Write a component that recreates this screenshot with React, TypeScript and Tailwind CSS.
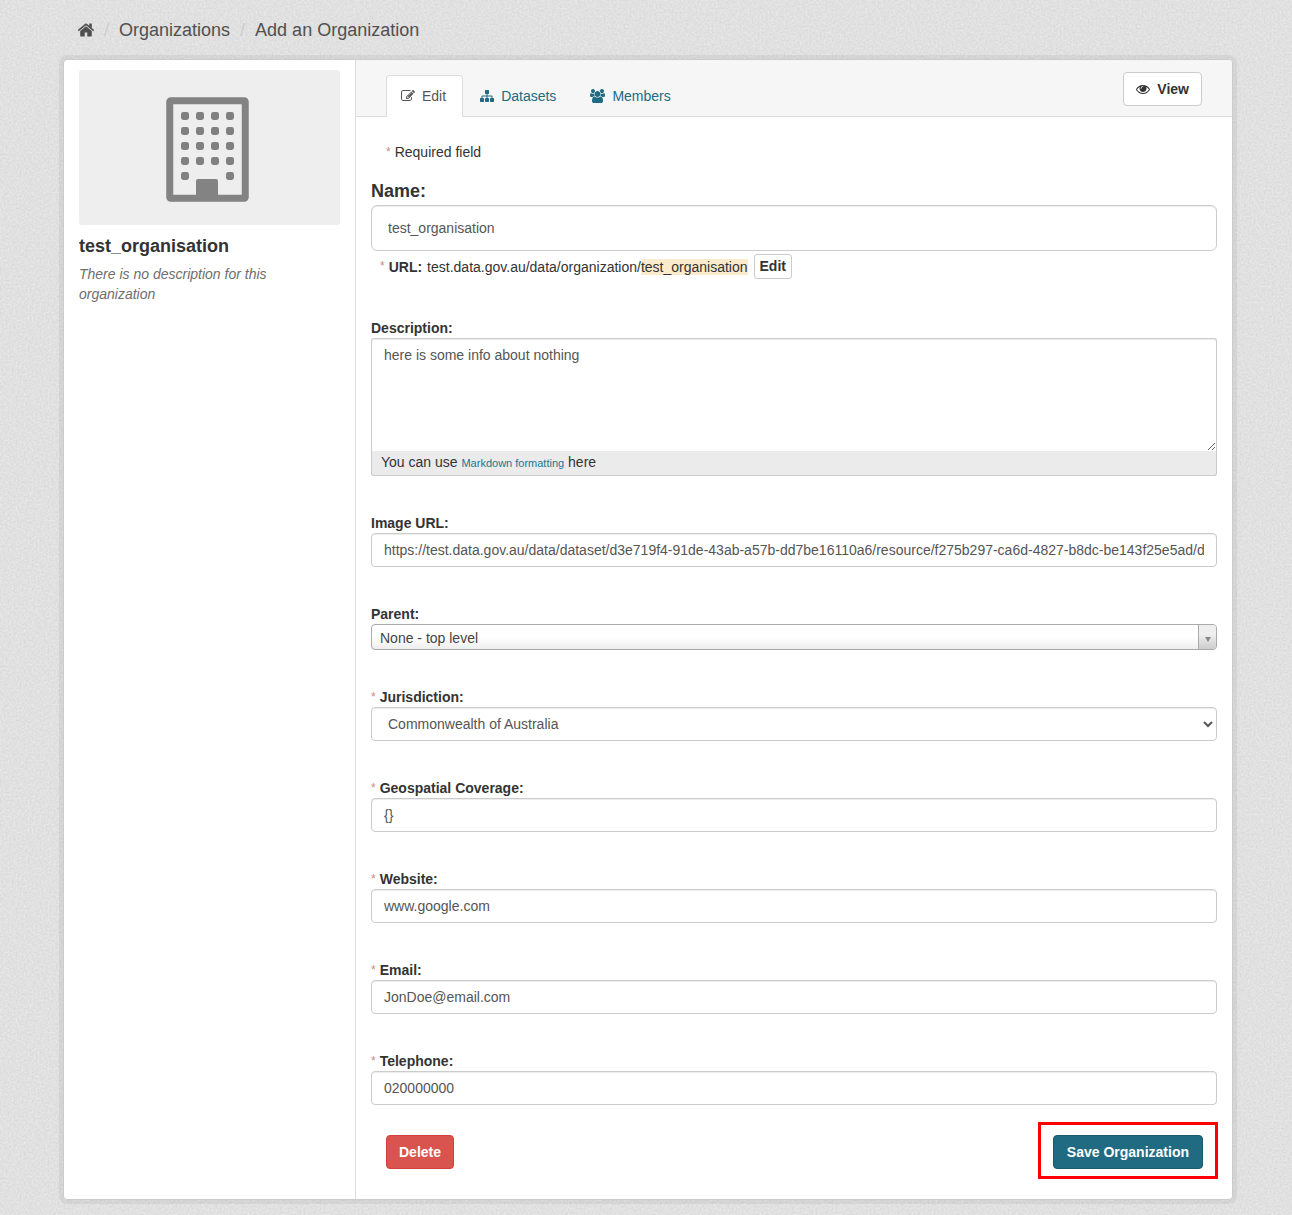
import React, { type ReactNode } from "react";

type IconProps = { d: string; box?: string; className?: string };

function Icon({ d, box = "0 0 1792 1792", className = "" }: IconProps) {
  return (
    <svg viewBox={box} fill="currentColor" aria-hidden="true" className={className}>
      <path d={d} />
    </svg>
  );
}

const HOME =
  "M1472 992v480q0 26-19 45t-45 19h-384v-384h-256v384h-384q-26 0-45-19t-19-45v-480q0-1 .5-3t.5-3l575-474 575 474q1 2 1 6zm223-69l-62 74q-8 9-21 11h-3q-13 0-21-7l-692-577-692 577q-12 8-24 7-13-2-21-11l-62-74q-8-10-7-23.5t11-21.5l719-599q32-26 76-26t76 26l244 204v-195q0-14 9-23t23-9h192q14 0 23 9t9 23v408l219 182q10 8 11 21.5t-7 23.5z";
const EYE =
  "M1664 960q-152-236-381-353 61 104 61 225 0 185-131.5 316.5t-316.5 131.5-316.5-131.5-131.5-316.5q0-121 61-225-229 117-381 353 133 205 333.5 326.5t434.5 121.5 434.5-121.5 333.5-326.5zm-720-384q0-20-14-34t-34-14q-125 0-214.5 89.5t-89.5 214.5q0 20 14 34t34 14 34-14 14-34q0-86 61-147t147-61q20 0 34-14t14-34zm848 384q0 34-20 69-140 230-376.5 368.5t-499.5 138.5-499.5-139-376.5-368q-20-35-20-69t20-69q140-229 376.5-368t499.5-139 499.5 139 376.5 368q20 35 20 69z";
const PENCIL =
  "M888 1184l116-116-152-152-116 116v56h96v96h56zm440-720q-16-16-33 1l-350 350q-17 17-1 33t33-1l350-350q17-17 1-33zm80 594v190q0 119-84.5 203.5t-203.5 84.5h-832q-119 0-203.5-84.5t-84.5-203.5v-832q0-119 84.5-203.5t203.5-84.5h832q63 0 117 25 15 7 18 23 3 17-9 29l-49 49q-14 14-32 8-23-6-45-6h-832q-66 0-113 47t-47 113v832q0 66 47 113t113 47h832q66 0 113-47t47-113v-126q0-13 9-22l64-64q15-15 35-7t20 29zm-96-738l288 288-672 672h-288v-288zm444 132l-92 92-288-288 92-92q28-28 68-28t68 28l152 152q28 28 28 68t-28 68z";
const SITEMAP =
  "M1792 1248v320q0 40-28 68t-68 28h-320q-40 0-68-28t-28-68v-320q0-40 28-68t68-28h96v-192h-512v192h96q40 0 68 28t28 68v320q0 40-28 68t-68 28h-320q-40 0-68-28t-28-68v-320q0-40 28-68t68-28h96v-192h-512v192h96q40 0 68 28t28 68v320q0 40-28 68t-68 28h-320q-40 0-68-28t-28-68v-320q0-40 28-68t68-28h96v-192q0-52 38-90t90-38h512v-192h-96q-40 0-68-28t-28-68v-320q0-40 28-68t68-28h320q40 0 68 28t28 68v320q0 40-28 68t-68 28h-96v192h512q52 0 90 38t38 90v192h96q40 0 68 28t28 68z";
const USERS =
  "M593 896q-162 5-265 128h-134q-82 0-138-40.5t-56-118.5q0-353 124-353 6 0 43.5 21t97.5 42.5 119 21.5q67 0 133-23-5 37-5 66 0 139 81 256zm1071 637q0 120-73 189.5t-194 69.5h-874q-121 0-194-69.5t-73-189.5q0-53 3.5-103.5t14-109 26.5-108.5 43-97.5 62-81 85.5-53.5 111.5-20q10 0 43 21.5t73 48 107 48 135 21.5 135-21.5 107-48 73-48 43-21.5q61 0 111.5 20t85.5 53.5 62 81 43 97.5 26.5 108.5 14 109 3.5 103.5zm-1024-1277q0 106-75 181t-181 75-181-75-75-181 75-181 181-75 181 75 75 181zm704 384q0 159-112.5 271.5t-271.5 112.5-271.5-112.5-112.5-271.5 112.5-271.5 271.5-112.5 271.5 112.5 112.5 271.5zm576 225q0 78-56 118.5t-138 40.5h-134q-103-123-265-128 81-117 81-256 0-29-5-66 66 23 133 23 59 0 119-21.5t97.5-42.5 43.5-21q124 0 124 353zm-128-609q0 106-75 181t-181 75-181-75-75-181 75-181 181-75 181 75 75 181z";

/* Fine paper grain behind the page */
function Grain() {
  return (
    <svg aria-hidden="true" className="pointer-events-none absolute inset-0 -z-10 h-full w-full">
      <filter id="grain" x="0" y="0" width="100%" height="100%" colorInterpolationFilters="sRGB">
        <feTurbulence type="fractalNoise" baseFrequency="0.5" numOctaves="2" seed="4" />
        <feColorMatrix values="0.1 0 0 0 0.83  0.1 0 0 0 0.83  0.1 0 0 0 0.83  0 0 0 0 1" />
      </filter>
      <rect width="100%" height="100%" filter="url(#grain)" />
    </svg>
  );
}

function Building() {
  const windows: [number, number][] = [];
  for (let row = 0; row < 5; row++) {
    for (let col = 0; col < 4; col++) {
      if (row < 4 || col === 0 || col === 3) windows.push([15 + col * 15, 15 + row * 15]);
    }
  }
  return (
    <svg viewBox="0 0 83 105" className="mt-1 mr-[5px] h-[105px] w-[83px]" role="img" aria-label="Organization">
      <rect x="3.75" y="3.75" width="75.5" height="97.5" rx="1" fill="#eee" stroke="#838383" strokeWidth="7" strokeLinejoin="round" />
      <path d="M30 98V84q0-2 2-2h18q2 0 2 2v14z" fill="#838383" />
      {windows.map(([x, y]) => (
        <rect key={`${x}-${y}`} x={x} y={y} width="8" height="8" rx="2.4" fill="#808080" />
      ))}
    </svg>
  );
}

function Star() {
  return <span className="mr-1 text-xs leading-5 font-normal text-[#c98a88]">*</span>;
}

const inputClass =
  "block h-[34px] w-full rounded border border-[#ccc] bg-white px-3 text-sm text-[#555] shadow-[inset_0_1px_1px_rgba(0,0,0,0.075)]";

function Field({ id, label, required, children }: { id: string; label: string; required?: boolean; children: ReactNode }) {
  return (
    <div className="mb-[37px]">
      <label htmlFor={id} className="flex h-5 items-center leading-5 font-bold">
        {required && <Star />}
        {label}
      </label>
      {children}
    </div>
  );
}

function TextField({ id, label, value, required }: { id: string; label: string; value: string; required?: boolean }) {
  return (
    <Field id={id} label={label} required={required}>
      <input id={id} type="text" defaultValue={value} className={inputClass} />
    </Field>
  );
}

export default function App() {
  return (
    <div className="relative isolate min-h-screen bg-[#e0e0e0] pr-[59px] pb-[15px] pl-[63px] font-['Liberation_Sans',Arial,sans-serif] text-sm leading-5 text-[#333]">
      <Grain />
      <nav aria-label="Breadcrumb" className="flex h-[59px] items-center pl-[14px] text-lg text-[#505050]">
        <a href="#home" aria-label="Home" className="block">
          <Icon d={HOME} className="size-[18px]" />
        </a>
        <span className="mr-[10px] ml-[9px] text-[#ccc]">/</span>
        <a href="#organizations">Organizations</a>
        <span className="mx-[10px] text-[#ccc]">/</span>
        <a href="#add">Add an Organization</a>
      </nav>

      <div className="flex rounded border border-[#ccc] bg-white shadow-[0_0_0_4px_rgba(0,0,0,0.05)]">
        <aside className="w-1/4 shrink-0 border-r border-[#ddd] px-[15px] pt-[10px]">
          <div className="flex h-[155px] items-center justify-center rounded-[3px] bg-[#eee]">
            <Building />
          </div>
          <h1 className="mt-[9px] text-lg leading-6 font-bold">test_organisation</h1>
          <p className="mt-[6px] text-[#6e6e6e] italic">There is no description for this organization</p>
        </aside>

        <main className="min-w-0 flex-1">
          <header className="flex h-[57px] items-end justify-between rounded-tr-[3px] border-b border-[#ddd] bg-[#f6f6f6] px-[30px]">
            <div className="-mb-px flex">
              <a href="#edit" className="flex h-[42px] items-center rounded-t border border-b-0 border-[#ddd] bg-white pr-4 pb-px pl-[14px] text-[#555]">
                <Icon d={PENCIL} className="mr-[7px] size-[14px]" />
                Edit
              </a>
              <a href="#datasets" className="ml-0.5 flex h-[42px] items-center px-[15px] text-[#206b82]">
                <Icon d={SITEMAP} className="mr-[7px] size-[14px]" />
                Datasets
              </a>
              <a href="#members" className="ml-1 flex h-[42px] items-center px-[15px] text-[#206b82]">
                <Icon d={USERS} box="0 0 1920 1792" className="mr-[7px] h-[14px] w-[15px]" />
                Members
              </a>
            </div>
            <a href="#view" className="mb-[10px] flex h-[34px] items-center rounded border border-[#ccc] bg-white px-3 font-bold">
              <Icon d={EYE} className="mr-[7px] size-[14px]" />
              View
            </a>
          </header>

          <form className="px-[15px] pt-[25px] pb-5" onSubmit={(e) => e.preventDefault()}>
            <p className="flex pl-[15px]">
              <Star />
              Required field
            </p>

            <div className="mt-[18px] mb-[37px]">
              <label htmlFor="name" className="block pb-0.5 text-lg leading-[23px] font-bold">
                Name:
              </label>
              <input
                id="name"
                type="text"
                defaultValue="test_organisation"
                className="block h-[46px] w-full rounded-md border border-[#ccc] bg-white px-4 text-sm text-[#555] shadow-[inset_0_1px_1px_rgba(0,0,0,0.075)]"
              />
              <div className="flex h-[30px] items-center pl-[9px]">
                <Star />
                <span className="pt-0.5">
                  <strong className="mr-[5px]">URL:</strong>
                  test.data.gov.au/data/organization/<span className="bg-[#faebcc]">test_organisation</span>
                </span>
                <button type="button" className="ml-[6px] h-[25px] rounded-[3px] border border-[#ccc] bg-white px-[5px] font-bold">
                  Edit
                </button>
              </div>
            </div>

            <Field id="description" label="Description:">
              <textarea
                id="description"
                defaultValue="here is some info about nothing"
                className="block h-[113px] w-full rounded-t-[3px] border border-b-0 border-[#ccc] bg-white px-3 py-[6px] text-sm leading-5 text-[#555] shadow-[inset_0_1px_1px_rgba(0,0,0,0.075)]"
              />
              <div className="h-[25px] rounded-b-[3px] border border-t-0 border-[#ccc] bg-[#ebebeb] px-[9px] leading-[22px] whitespace-pre">
                You can use{" "}
                <a href="#markdown" className="text-[11px] text-[#187794]">
                  Markdown formatting
                </a>{" "}
                here
              </div>
            </Field>

            <TextField
              id="image"
              label="Image URL:"
              value="https://test.data.gov.au/data/dataset/d3e719f4-91de-43ab-a57b-dd7be16110a6/resource/f275b297-ca6d-4827-b8dc-be143f25e5ad/download"
            />

            <Field id="parent" label="Parent:">
              <div className="relative">
                <select
                  id="parent"
                  className="block h-[26px] w-full appearance-none rounded border border-[#aaa] bg-white bg-linear-to-t from-[#eee] to-white to-50% pt-0.5 pr-6 pl-2 text-sm text-[#444]"
                >
                  <option>None - top level</option>
                </select>
                <span className="pointer-events-none absolute inset-y-px right-px flex w-[18px] items-center justify-center rounded-r-[3px] border-l border-[#aaa] bg-linear-to-t from-[#ccc] to-[#eee] to-60%">
                  <svg viewBox="0 0 6 5" className="mt-1 h-[5px] w-[6px]" fill="#888" aria-hidden="true">
                    <path d="M0 0h6L3 5z" />
                  </svg>
                </span>
              </div>
            </Field>

            <Field id="jurisdiction" label="Jurisdiction:" required>
              <select id="jurisdiction" className={inputClass}>
                <option>Commonwealth of Australia</option>
              </select>
            </Field>

            <TextField id="geo" label="Geospatial Coverage:" value="{}" required />
            <TextField id="website" label="Website:" value="www.google.com" required />
            <TextField id="email" label="Email:" value="JonDoe@email.com" required />
            <TextField id="telephone" label="Telephone:" value="020000000" required />

            <div className="-mt-5 flex items-start justify-between pl-[15px]">
              <button type="button" className="mt-[13px] h-[34px] rounded border border-[#d43f3a] bg-[#d9534f] px-3 font-bold text-white">
                Delete
              </button>
              <div className="-mr-px border-[3px] border-[#f00] px-3 pt-[10px] pb-[7px]">
                <button type="submit" className="block h-[34px] rounded border border-[#1b5a6e] bg-[#206b82] px-[13px] font-bold text-white">
                  Save Organization
                </button>
              </div>
            </div>
          </form>
        </main>
      </div>
    </div>
  );
}
